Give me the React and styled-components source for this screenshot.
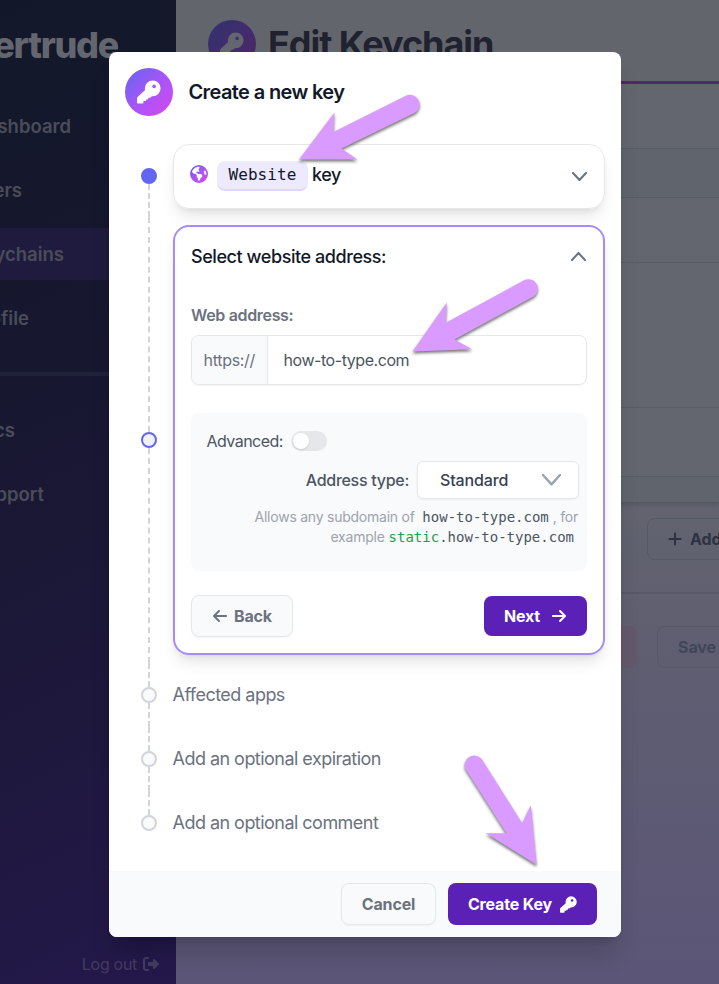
import React from 'react';
import styled, { createGlobalStyle, css } from 'styled-components';
import {
  FaEarthAmericas,
  FaArrowLeft,
  FaArrowRight,
  FaRightFromBracket,
  FaPlus,
} from 'react-icons/fa6';

const GlobalStyle = createGlobalStyle`
  *, *::before, *::after { box-sizing: border-box; }
  body { margin: 0; font-family: Inter, "Liberation Sans", sans-serif; -webkit-font-smoothing: antialiased; }
  button { font-family: inherit; }
`;

const mono = css`font-family: "DejaVu Sans Mono", "Liberation Mono", monospace;`;

const Page = styled.div`
  position: relative;
  display: flex;
  height: 984px;
  width: 719px;
  overflow: hidden;
`;

/* ---------- dashboard behind the dialog ---------- */

const Sidebar = styled.aside`
  width: 176px;
  flex: none;
  display: flex;
  flex-direction: column;
  padding-bottom: 8px;
  background: linear-gradient(155deg, #121829 0%, #17172f 35%, #1e183d 72%, #24184b 100%);
`;

const Logo = styled.div`
  height: 94px;
  width: 118px;
  padding-bottom: 4px;
  display: flex;
  align-items: center;
  justify-content: flex-end;
  overflow: hidden;
  font-size: 36px;
  font-weight: 800;
  letter-spacing: -1.3px;
  color: #64666f;
`;

const NavItem = styled.a`
  height: 52px;
  margin-top: ${(p) => p.$top ?? 12}px;
  display: flex;
  align-items: center;
  background: ${(p) => (p.$active ? '#1e1b3e' : 'transparent')};
`;

const NavLabel = styled.span`
  width: ${(p) => p.$w}px;
  display: flex;
  justify-content: flex-end;
  overflow: hidden;
  font-size: 18.5px;
  font-weight: 600;
  color: #4a4c5a;
`;

const NavRule = styled.div`
  height: 4px;
  margin-top: 28px;
  background: #20213a;
`;

const Logout = styled.div`
  margin-top: auto;
  display: flex;
  align-items: center;
  justify-content: flex-end;
  gap: 6px;
  padding-right: 17px;
  font-size: 16px;
  line-height: 24px;
  letter-spacing: -0.3px;
  color: #443b61;
`;

const Main = styled.main`
  flex: 1;
  min-width: 0;
  display: flex;
  flex-direction: column;
  background: linear-gradient(#64666f 0, #62646e 480px, #5e5c72 720px, #5b5577 984px);
`;

const MainHeader = styled.header`
  height: 84px;
  display: flex;
  align-items: center;
  gap: 12px;
  padding: 7px 0 0 32px;
  background: #63656d;
  border-bottom: 3px solid #4c2a6c;
`;

const MainTitle = styled.h1`
  margin: 0;
  font-size: 36px;
  font-weight: 700;
  letter-spacing: -1.05px;
  color: #20232f;
  white-space: nowrap;
`;

const IconDisc = styled.span`
  width: 48px;
  height: 48px;
  flex: none;
  border-radius: 50%;
  display: grid;
  place-items: center;
  color: ${(p) => (p.$dim ? '#64666f' : '#fff')};
  background: ${(p) =>
    p.$dim
      ? 'linear-gradient(135deg, #30336f, #512568)'
      : 'linear-gradient(135deg, #6366f1, #a855f7 52%, #d946ef)'};
`;

const Table = styled.section`
  flex: none;
  border-bottom: 1px solid #555862;
  box-shadow: 0 2px 4px rgba(0, 0, 0, 0.12);
`;

const TableRow = styled.div`
  height: ${(p) => p.$h}px;
  background: ${(p) => (p.$shade ? '#60646d' : '#63666f')};
  border-bottom: 1px solid #595c66;
  &:last-child { border-bottom: 0; }
`;

const ActionBar = styled.div`
  flex: none;
  display: flex;
  justify-content: flex-end;
  margin-right: -60px;
  height: ${(p) => p.$h}px;
  padding-top: ${(p) => p.$pt}px;
  border-bottom: ${(p) => (p.$line ? '2px solid #565969' : '0')};
`;

const DimButton = styled.div`
  width: ${(p) => p.$w}px;
  height: 42px;
  flex: none;
  margin-left: 20px;
  padding-left: ${(p) => p.$pl ?? 20}px;
  display: flex;
  align-items: center;
  gap: 7px;
  border: 1px solid ${(p) => (p.$danger ? '#68566b' : '#565968')};
  border-radius: 8px;
  background: ${(p) => (p.$danger ? '#62596c' : 'transparent')};
  font-size: 16px;
  font-weight: 700;
  letter-spacing: -0.1px;
  color: ${(p) => (p.$soft ? '#41455a' : '#2d3142')};
  white-space: nowrap;
`;

/* ---------- dialog ---------- */

const Overlay = styled.div`
  position: absolute;
  inset: 0;
  padding: 52px 98px 47px 109px;
`;

const Dialog = styled.div`
  height: 885px;
  display: flex;
  flex-direction: column;
  overflow: hidden;
  background: #fff;
  border-radius: 8px;
  box-shadow: 0 20px 25px -5px rgba(0, 0, 0, 0.16), 0 8px 10px -6px rgba(0, 0, 0, 0.12);
`;

const DialogHeader = styled.header`
  height: 84px;
  flex: none;
  display: flex;
  gap: 15.500px;
  padding: 16px 16px 0;
`;

const DialogTitle = styled.h2`
  margin: 0;
  line-height: 48px;
  font-size: 20px;
  font-weight: 600;
  letter-spacing: -0.62px;
  color: #111827;
`;

const Steps = styled.ol`
  flex: 1;
  margin: 0;
  padding: 0 16px 0 32px;
  list-style: none;
`;

const Step = styled.li`
  display: flex;
  gap: 16px;
  height: ${(p) => p.$h}px;
`;

const Rail = styled.div`
  width: 16px;
  flex: none;
  display: flex;
  flex-direction: column;
  align-items: center;
`;

const RailLine = styled.span`
  flex: 1;
  width: 2px;
  border-left: 2px dashed #d1d5db;
`;

const RailSpace = styled.span`
  flex: 0 0 ${(p) => p.$h}px;
`;

const Dot = styled.span`
  width: 16px;
  height: 16px;
  flex: none;
  border-radius: 50%;
  border: 2px solid ${(p) => (p.$state === 'todo' ? '#d1d5db' : '#6366f1')};
  background: ${(p) => ({ done: '#6366f1', current: '#eef2ff', todo: '#f9fafb' })[p.$state]};
`;

const StepLabel = styled.span`
  margin-left: -0.5px;
  line-height: 64px;
  font-size: 18px;
  letter-spacing: -0.53px;
  color: #6b7280;
`;

const Card = styled.section`
  flex: 1;
  margin: 8px 0;
  border-radius: 16px;
  border: ${(p) => (p.$open ? '2px solid #a78bfa' : '1px solid #e5e7eb')};
  padding: 0 16px;
  box-shadow: 0 10px 15px -3px rgba(0, 0, 0, 0.1), 0 4px 6px -4px rgba(0, 0, 0, 0.1);
`;

const CardHead = styled.header`
  height: ${(p) => p.$h}px;
  display: flex;
  align-items: center;
  font-size: 18px;
  font-weight: 500;
  letter-spacing: -0.43px;
  color: #111827;
  & > svg:last-child { margin: 0 1px 0 auto; }
`;

const Globe = styled(FaEarthAmericas)`
  width: 18px;
  height: 18px;
  margin: 0 9px 5px 0;
  path { fill: url(#globeFill); }
`;

const Chip = styled.span`
  ${mono}
  height: 30px;
  width: 91px;
  margin: 0 4px 1px 0;
  display: flex;
  align-items: center;
  justify-content: center;
  padding-bottom: 1px;
  border-radius: 8px;
  border-bottom: 2px solid #ddd6fe;
  background: #ede9fe;
  font-size: 16px;
  font-weight: 400;
  letter-spacing: 0.1px;
`;

const KeyWord = styled.span`
  margin-bottom: 4px;
`;

const FieldLabel = styled.label`
  display: block;
  margin-top: 18px;
  line-height: 24px;
  font-size: 16px;
  font-weight: 600;
  letter-spacing: -0.33px;
  color: #6b7280;
`;

const InputGroup = styled.div`
  height: 50px;
  margin-top: 8px;
  display: flex;
  align-items: center;
  border: 1px solid #e5e7eb;
  border-radius: 8px;
  overflow: hidden;
  box-shadow: 0 1px 2px rgba(0, 0, 0, 0.05);
  font-size: 16px;
  letter-spacing: -0.44px;
  color: #4b5563;
`;

const Prefix = styled.span`
  width: 76px;
  height: 100%;
  padding-left: 11.5px;
  margin-right: 15.5px;
  line-height: 48px;
  letter-spacing: -0.3px;
  border-right: 1px solid #e5e7eb;
  background: #f9fafb;
  color: #6b7280;
`;

const Panel = styled.div`
  height: 158px;
  margin-top: 28px;
  padding: 16px 8px 0 15.5px;
  border-radius: 8px;
  background: #f9fafb;
  color: #4b5563;
`;

const PanelRow = styled.div`
  display: flex;
  align-items: center;
  justify-content: ${(p) => (p.$end ? 'flex-end' : 'flex-start')};
  gap: 8px;
  height: ${(p) => (p.$end ? 38 : 24)}px;
  margin-top: ${(p) => (p.$end ? 8 : 0)}px;
  font-size: 16px;
  font-weight: ${(p) => (p.$end ? 500 : 400)};
  letter-spacing: ${(p) => (p.$end ? -0.28 : -0.54)}px;
`;

const Toggle = styled.span`
  width: 36px;
  height: 20px;
  padding: 2px;
  border-radius: 10px;
  background: #e5e7eb;
  &::before {
    content: '';
    display: block;
    width: 16px;
    height: 16px;
    border-radius: 50%;
    background: #fff;
    box-shadow: 0 1px 2px rgba(0, 0, 0, 0.12);
  }
`;

const Select = styled.div`
  width: 162px;
  height: 38px;
  display: flex;
  align-items: center;
  justify-content: space-between;
  padding: 0 17px 0 22px;
  border: 1px solid #e5e7eb;
  border-radius: 6px;
  background: #fff;
  box-shadow: 0 1px 2px rgba(0, 0, 0, 0.05);
  letter-spacing: -0.15px;
  color: #374151;
`;

const Hint = styled.p`
  margin: 8px 1px 0 0;
  text-align: right;
  font-size: 14px;
  line-height: 20px;
  letter-spacing: -0.24px;
  color: #9ca3af;
`;

const Code = styled.code`
  ${mono}
  padding: 0 4px;
  font-size: 14px;
  letter-spacing: 0;
  color: #4b5563;
  b { font-weight: 400; color: #16a34a; }
`;

const ButtonRow = styled.div`
  display: flex;
  align-items: center;
  justify-content: space-between;
  margin-top: 24px;
`;

const Button = styled.button`
  width: ${(p) => p.$w}px;
  height: ${(p) => p.$h ?? 42}px;
  padding: 0;
  display: flex;
  align-items: center;
  justify-content: center;
  gap: ${(p) => p.$gap ?? 8}px;
  border: ${(p) => (p.$primary ? '0' : '1px solid #e5e7eb')};
  border-radius: 8px;
  background: ${(p) => (p.$primary ? '#5b21b6' : '#f9fafb')};
  color: ${(p) => (p.$primary ? '#fff' : '#6b7280')};
  box-shadow: ${(p) => (p.$primary ? 'none' : '0 1px 2px rgba(0,0,0,.04)')};
  font-size: 16px;
  font-weight: 700;
  letter-spacing: -0.15px;
`;

const DialogFooter = styled.footer`
  height: 66px;
  flex: none;
  display: flex;
  align-items: center;
  justify-content: flex-end;
  gap: 12px;
  padding-right: 24px;
  background: #f9fafb;
`;

const Pointers = styled.svg`
  position: absolute;
  inset: 0;
  pointer-events: none;
  fill: #d99bff;
  path { filter: drop-shadow(0.5px 2.5px 1.5px rgba(0, 0, 0, 0.55)); }
`;

const KeyIcon = ({ size = 24 }) => (
  <svg width={size} height={size} viewBox="0 0 25 24" fill="currentColor">
    <path
      fillRule="evenodd"
      d="M16.4 0A8.2 8.2 0 0 1 24.6 8.200A8.2 8.2 0 0 1 16.400 16.400H15.500L14.400 17.400Q14 17.900 13.300 17.900H11.800V18.900Q11.800 19.800 10.900 19.800H9.500V20.500Q9.500 21.300 8.600 21.300H6.700V23Q6.700 24 5.700 24H1.100Q0 24 0 22.900V18.600Q0 17.800.6 17.200L8.500 10Q8.200 9.100 8.200 8.200A8.2 8.2 0 0 1 16.400 0ZM17.800 4.300A1.900 1.900 0 1 0 17.800 8.100A1.900 1.900 0 1 0 17.800 4.300Z"
    />
  </svg>
);

const Chevron = ({ up, size = 14, color = '#6b7280', stroke = 2 }) => (
  <svg width={size} height={size * 0.6} viewBox={`0 0 ${size} ${size * 0.6}`} fill="none">
    <path
      d={
        up
          ? `M1 ${size * 0.6 - 1} L${size / 2} 1 L${size - 1} ${size * 0.6 - 1}`
          : `M1 1 L${size / 2} ${size * 0.6 - 1} L${size - 1} 1`
      }
      stroke={color}
      strokeWidth={stroke}
      strokeLinecap="round"
      strokeLinejoin="round"
    />
  </svg>
);

const TimelineStep = ({ height, state, first, last, children }) => (
  <Step $h={height}>
    <Rail>
      {first ? <RailSpace $h={32} /> : <RailLine />}
      <Dot $state={state} />
      {last ? <RailSpace $h={24} /> : <RailLine />}
    </Rail>
    {children}
  </Step>
);

const Dashboard = () => (
  <>
    <Sidebar>
      <Logo>Gertrude</Logo>
      <NavItem $top={6}><NavLabel $w={71}>Dashboard</NavLabel></NavItem>
      <NavItem><NavLabel $w={22}>Users</NavLabel></NavItem>
      <NavItem $active><NavLabel $w={64}>Keychains</NavLabel></NavItem>
      <NavItem><NavLabel $w={29}>Profile</NavLabel></NavItem>
      <NavRule />
      <NavItem $top={28}><NavLabel $w={15}>Docs</NavLabel></NavItem>
      <NavItem><NavLabel $w={44}>Support</NavLabel></NavItem>
      <Logout>Log out <FaRightFromBracket /></Logout>
    </Sidebar>
    <Main>
      <MainHeader>
        <IconDisc $dim><KeyIcon /></IconDisc>
        <MainTitle>Edit Keychain</MainTitle>
      </MainHeader>
      <Table>
        <TableRow $h={65} />
        <TableRow $h={49} $shade />
        <TableRow $h={65} />
        <TableRow $h={145} />
        <TableRow $h={69} />
        <TableRow $h={25} $shade />
      </Table>
      <ActionBar $h={91} $pt={15} $line>
        <DimButton $w={132} $pl={19}><FaPlus />Add key</DimButton>
      </ActionBar>
      <ActionBar $h={80} $pt={32}>
        <DimButton $w={120} $danger />
        <DimButton $w={122} $soft>Save</DimButton>
      </ActionBar>
    </Main>
  </>
);

export default function App() {
  return (
    <>
      <GlobalStyle />
      <Page>
        <Dashboard />
        <Overlay>
          <Dialog>
            <DialogHeader>
              <IconDisc><KeyIcon /></IconDisc>
              <DialogTitle>Create a new key</DialogTitle>
            </DialogHeader>
            <Steps>
              <TimelineStep height={81} state="done" first>
                <Card>
                  <CardHead $h={63}>
                    <Globe />
                    <Chip>Website</Chip>
                    <KeyWord>key</KeyWord>
                    <Chevron size={15} />
                  </CardHead>
                </Card>
              </TimelineStep>
              <TimelineStep height={446} state="current">
                <Card $open>
                  <CardHead $h={58}>
                    Select website address:
                    <Chevron up size={15} />
                  </CardHead>
                  <FieldLabel>Web address:</FieldLabel>
                  <InputGroup><Prefix>https://</Prefix>how-to-type.com</InputGroup>
                  <Panel>
                    <PanelRow>Advanced:<Toggle /></PanelRow>
                    <PanelRow $end>
                      Address type:
                      <Select>Standard<Chevron size={19} color="#9ca3af" stroke={2.4} /></Select>
                    </PanelRow>
                    <Hint>
                      Allows any subdomain of <Code>how-to-type.com</Code>, for<br />
                      example<Code><b>static</b>.how-to-type.com</Code>
                    </Hint>
                  </Panel>
                  <ButtonRow>
                    <Button $w={102} $gap={6}><FaArrowLeft />Back</Button>
                    <Button $w={103} $h={40} $gap={11} $primary>Next<FaArrowRight /></Button>
                  </ButtonRow>
                </Card>
              </TimelineStep>
              <TimelineStep height={64} state="todo"><StepLabel>Affected apps</StepLabel></TimelineStep>
              <TimelineStep height={64} state="todo"><StepLabel>Add an optional expiration</StepLabel></TimelineStep>
              <TimelineStep height={64} state="todo" last><StepLabel>Add an optional comment</StepLabel></TimelineStep>
            </Steps>
            <DialogFooter>
              <Button $w={95}>Cancel</Button>
              <Button $w={149} $primary>Create Key<KeyIcon size={17} /></Button>
            </DialogFooter>
          </Dialog>
        </Overlay>
        <Pointers width="719" height="984" viewBox="0.5 0.5 719 984">
          <defs>
            <linearGradient id="globeFill" x1="0" y1="0" x2="1" y2="1">
              <stop offset="0" stopColor="#6366f1" />
              <stop offset="0.5" stopColor="#a855f7" />
              <stop offset="1" stopColor="#d946ef" />
            </linearGradient>
          </defs>
          <path d="M299.5 160 L335 113 L334 132.5 L406 96.5 A9.6 9.6 0 0 1 415 113.5 L342 149 L358 160Z" />
          <path d="M413 352 L447.3 303 L446.3 323.3 L524.5 280.8 A9.4 9.4 0 0 1 534 297 L455 340 L472.7 349.8Z" />
          <path d="M537 865.3 L531.3 805.7 L522.7 823.7 L482 759.3 A9.6 9.6 0 0 0 466 769.5 L507 833.7 L486.3 833.7Z" />
        </Pointers>
      </Page>
    </>
  );
}
